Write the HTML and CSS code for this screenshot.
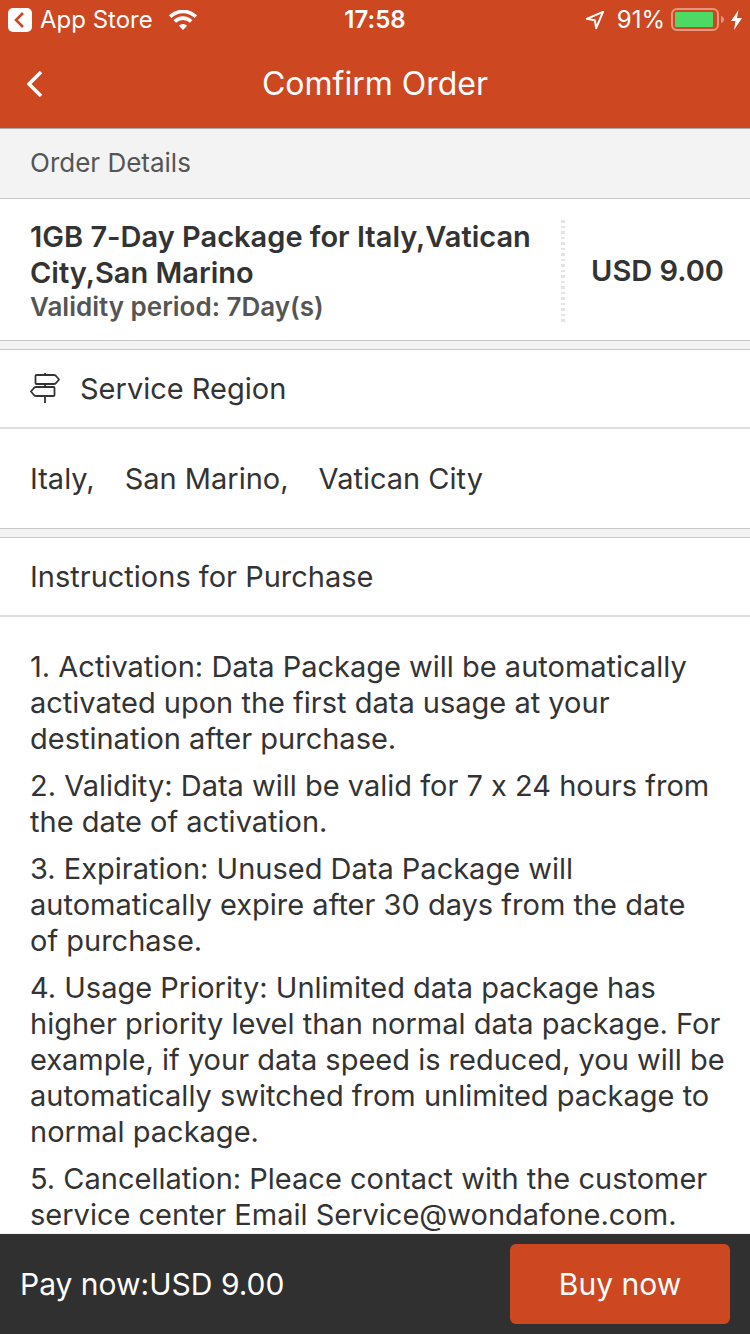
FILE: index.html
```html
<!DOCTYPE html>
<html lang="en">
<head>
    <meta charset="UTF-8">
    <meta name="viewport" content="width=device-width, initial-scale=1.0">
    <title>Comfirm Order</title>
    <link rel="stylesheet" href="styles.css">
</head>
<body>
    <div class="status-bar">
        <div class="status-left">
            <svg width="24" height="24" viewBox="0 0 24 24">
                <rect width="24" height="24" rx="5" fill="#fff"/>
                <path d="M15 5L8 12l7 7" fill="none" stroke="#cd4721" stroke-width="2.6"/>
            </svg>
            <a href="#" class="app-link">App Store</a>
            <svg class="wifi" width="28" height="20" viewBox="0 0 28 20" fill="none" stroke="#fff" stroke-width="3.6">
                <path d="M1.2 6.600a18.200 18.200 0 0 1 25.600 0"/>
                <path d="M5.800 11.500a11.600 11.600 0 0 1 16.400 0"/>
                <path d="M14 20l-4.200-4.300a6 6 0 0 1 8.400 0z" fill="#fff" stroke="none"/>
            </svg>
        </div>
        <div class="status-time">17:58</div>
        <div class="status-right">
            <svg width="20" height="20" viewBox="0 0 20 20" fill="none" stroke="#fff" stroke-width="2" stroke-linejoin="round">
                <path d="M18 1.800L1.800 8.800l8 1.400 1.400 8z"/>
            </svg>
            <span class="percent">91%</span>
            <svg width="54" height="24" viewBox="0 0 54 24">
                <rect x="1" y="1" width="46" height="21" rx="5" fill="none" stroke="#e4967f" stroke-width="2"/>
                <rect x="4" y="4" width="38" height="15" rx="1" fill="#4cd964"/>
                <path d="M50 8c4 1 4 6 0 7z" fill="#e4967f"/>
            </svg>
            <svg width="11" height="20" viewBox="0 0 11 20">
                <path d="M7.500 0L0 11h4.500L3 20L11 8H6z" fill="#fff"/>
            </svg>
        </div>
    </div>

    <header class="navbar">
        <button class="back" aria-label="Back">
            <svg width="16" height="28" viewBox="0 0 16 28">
                <path d="M14 2L2 14l12 12" fill="none" stroke="#fff" stroke-width="3.600"/>
            </svg>
        </button>
        <h1>Comfirm Order</h1>
    </header>

    <main>
        <h2 class="group-title">Order Details</h2>

        <section class="card package">
            <div class="package-info">
                <h3>1GB 7-Day Package for Italy,Vatican City,San Marino</h3>
                <p>Validity period: 7Day(s)</p>
            </div>
            <div class="divider"></div>
            <div class="package-price">USD 9.00</div>
        </section>

        <section class="card">
            <h2 class="card-title">
                <svg width="30" height="32" viewBox="0 0 30 32" fill="none" stroke="#333" stroke-width="1.800" stroke-linejoin="round">
                    <path d="M15 0v2M15 11v3M15 23v7"/>
                    <path d="M6.500 2H24q1.500 0 2.500 1.500L29 6.500L26.500 9.500Q25.500 11 24 11H6.500Q5.500 11 5.500 10V3Q5.500 2 6.500 2z"/>
                    <path d="M23.500 14H6q-1.500 0-2.500 1.500L1 18.500l2.500 3Q4.500 23 6 23h17.500q1 0 1-1v-7q0-1-1-1z"/>
                </svg>
                Service Region
            </h2>
            <ul class="regions">
                <li>Italy,</li>
                <li>San Marino,</li>
                <li>Vatican City</li>
            </ul>
        </section>

        <section class="card">
            <h2 class="card-title">Instructions for Purchase</h2>
            <div class="instructions">
                <p>1. Activation: Data Package will be automatically activated upon the first data usage at your destination after purchase.</p>
                <p>2. Validity: Data will be valid for 7 x 24 hours from the date of activation.</p>
                <p>3. Expiration: Unused Data Package will automatically expire after 30 days from the date<br>of purchase.</p>
                <p>4. Usage Priority: Unlimited data package has higher priority level than normal data package. For example, if your data speed is reduced, you will be automatically switched from unlimited package to normal package.</p>
                <p>5. Cancellation: Pleace contact with the customer service center Email Service@wondafone.com.</p>
            </div>
        </section>
    </main>

    <footer class="pay-bar">
        <span>Pay now:USD 9.00</span>
        <button class="buy">Buy now</button>
    </footer>
</body>
</html>
```
FILE: styles.css
```css
* {
    box-sizing: border-box;
}

body {
    margin: 0;
    height: 100vh;
    display: flex;
    flex-direction: column;
    font-family: Inter, "Liberation Sans", sans-serif;
    font-size: 29px;
    font-variant-ligatures: no-contextual;
    line-height: 36px;
    color: #333;
    background: #f3f3f3;
}

h1, h2, h3, p, ul {
    margin: 0;
    padding: 0;
    font-size: inherit;
    font-weight: 400;
}

button {
    border: none;
    font: inherit;
    color: #fff;
    cursor: pointer;
}

svg {
    flex: none;
    display: block;
}

.status-bar {
    display: grid;
    grid-template-columns: 1fr auto 1fr;
    align-items: center;
    height: 40px;
    padding: 0 8px;
    font-size: 24px;
    color: #fff;
    background: #cd4721;
}

.status-left, .status-right {
    display: flex;
    align-items: center;
    gap: 8px;
}

.status-right {
    justify-content: flex-end;
    gap: 6px;
}

.app-link {
    color: #fff;
    text-decoration: none;
}

.wifi {
    margin-left: 8px;
}

.status-time {
    font-weight: 600;
}

.percent {
    margin-left: 6px;
}

.navbar {
    display: grid;
    grid-template-columns: 72px 1fr 72px;
    align-items: center;
    height: 89px;
    color: #fff;
    background: #cd4721;
    border-bottom: 1px solid #aaa;
}

.back {
    display: flex;
    align-items: center;
    height: 88px;
    padding: 0 27px;
    background: none;
}

.navbar h1 {
    font-size: 32px;
    text-align: center;
}

main {
    flex: 1;
    min-height: 0;
    overflow-y: auto;
    scrollbar-width: none;
}

.group-title {
    padding: 16px 30px 17px;
    font-size: 26px;
    color: #555;
}

.card {
    background: #fff;
    border-top: 1px solid #c8c8c8;
    border-bottom: 1px solid #c8c8c8;
    margin-bottom: 8px;
}

.card:last-child {
    margin-bottom: 0;
    border-bottom: none;
}

.package {
    display: flex;
    padding: 20px 26px 17px 30px;
}

.package-info {
    flex: 1;
}

.package h3 {
    font-weight: 600;
}

.package p {
    line-height: 32px;
    font-size: 26px;
    font-weight: 600;
    color: #555;
}

.divider {
    width: 4px;
    margin: 1px 0;
    background: repeating-linear-gradient(#e4e4e4 0 3px, transparent 3px 6px, #e4e4e4 6px 8px, transparent 8px 11px);
}

.package-price {
    display: flex;
    align-items: center;
    padding-left: 26px;
    font-weight: 600;
}

.card-title {
    display: flex;
    align-items: center;
    gap: 20px;
    height: 79px;
    padding: 0 30px;
    border-bottom: 2px solid #ddd;
}

.regions {
    display: flex;
    gap: 30px;
    padding: 32px 30px 31px;
    list-style: none;
}

.instructions {
    padding: 32px 20px 0 30px;
}

.instructions p {
    margin-bottom: 11px;
}

.instructions p:last-child {
    margin-bottom: 0;
}

.pay-bar {
    flex: none;
    display: flex;
    align-items: center;
    justify-content: space-between;
    height: 100px;
    padding: 0 20px;
    font-size: 30px;
    color: #fff;
    background: #303030;
}

.buy {
    width: 220px;
    height: 80px;
    border-radius: 6px;
    background: #cd4721;
}
```
